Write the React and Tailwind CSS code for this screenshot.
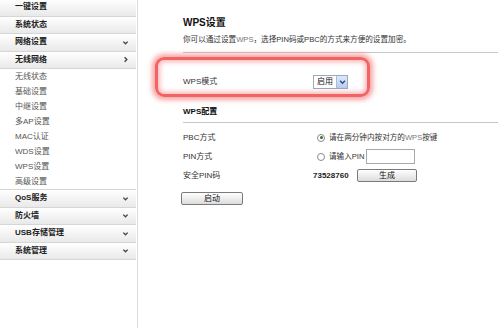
import React from 'react'

const font = { fontFamily: '"Liberation Sans", "Noto Sans CJK SC", sans-serif' }

const menuTop = [
  { label: '一键设置' },
  { label: '系统状态' },
  { label: '网络设置', icon: 'down' },
  { label: '无线网络', icon: 'right' },
]

const subMenu = ['无线状态', '基础设置', '中继设置', '多AP设置', 'MAC认证', 'WDS设置', 'WPS设置', '高级设置']

const menuBottom = ['QoS服务', '防火墙', 'USB存储管理', '系统管理']

const Chevron = ({ dir }) => (
  <svg width="7" height="7" viewBox="0 0 8 8" className="text-[#444]">
    {dir === 'right' ? (
      <path d="M3 1.5 L5.5 4 L3 6.5" fill="none" stroke="currentColor" strokeWidth="1.6" />
    ) : (
      <path d="M1.5 3 L4 5.5 L6.5 3" fill="none" stroke="currentColor" strokeWidth="1.6" />
    )}
  </svg>
)

const MenuRow = ({ label, icon }) => (
  <div className="h-[17.5px] flex items-center justify-between pl-[15px] pr-[7px] border-b border-[#d6d6d6] bg-gradient-to-b from-[#ffffff] to-[#e9e9e9] text-[8px] font-bold text-[#222]">
    <span>{label}</span>
    {icon && <Chevron dir={icon} />}
  </div>
)

const Radio = ({ checked }) => (
  <span className="w-[8px] h-[8px] rounded-full border border-[#8a8a8a] bg-white flex items-center justify-center mr-[4px]">
    {checked && <span className="w-[3px] h-[3px] rounded-full bg-[#3a6a3a]" />}
  </span>
)

const Button = ({ children, className }) => (
  <button className={`h-[13px] border border-[#7a7a7a] rounded-[2px] bg-gradient-to-b from-[#ffffff] to-[#dcdcdc] text-[8px] text-[#111] leading-none flex items-center justify-center ${className}`}>
    {children}
  </button>
)

export default function App() {
  return (
    <div className="w-[498px] h-[328px] bg-white flex overflow-hidden" style={font}>
      {/* Sidebar */}
      <aside className="w-[138px] h-full border-r border-[#dcdcdc] flex flex-col">
        <div className="-mt-[1px] w-[136px]">
          {menuTop.map((m) => (
            <MenuRow key={m.label} {...m} />
          ))}
          <div className="bg-white border-b border-[#d6d6d6]">
            {subMenu.map((s) => (
              <div key={s} className="h-[15px] flex items-center pl-[15px] text-[8px] text-[#555]">
                {s}
              </div>
            ))}
          </div>
          {menuBottom.map((m) => (
            <MenuRow key={m} label={m} icon="down" />
          ))}
        </div>
      </aside>

      {/* Main */}
      <main className="relative flex-1 pl-[45px] pt-[17px] text-[#333]">
        <div className="h-[12px] leading-[12px] text-[10px] font-bold text-[#111]">WPS设置</div>
        <div className="mt-[6px] h-[10px] leading-[10px] text-[7.6px]">
          你可以通过设置<span className="text-[#777]">WPS</span>，选择PIN码或PBC的方式来方便的设置加密。
        </div>
        <div className="mt-[7px] border-t border-[#c8c8c8]" />

        <div className="mt-[22px] h-[14px] flex items-center text-[8px]">
          <span className="w-[130px]">WPS模式</span>
          <div className="h-[14px] flex items-center border border-[#9aa9c0] bg-white">
            <span className="px-[3px] text-[8px] text-[#111]">启用</span>
            <span className="w-[11px] h-[12px] bg-gradient-to-b from-[#dce8fa] to-[#b7cdee] border-l border-[#a9bcdc] flex items-center justify-center">
              <svg width="7" height="6" viewBox="0 0 8 6">
                <path d="M1.2 1.5 L4 4.3 L6.8 1.5" fill="none" stroke="#2b4a88" strokeWidth="1.6" />
              </svg>
            </span>
          </div>
        </div>

        <div className="mt-[18px] h-[10px] leading-[10px] text-[8px] font-bold text-[#111]">WPS配置</div>
        <div className="mt-[5px] border-t border-[#c8c8c8]" />

        <div className="mt-[5px] text-[8px]">
          <div className="h-[19px] flex items-center">
            <span className="w-[134px]">PBC方式</span>
            <Radio checked />
            <span className="text-[7.6px]">请在两分钟内按对方的<span className="text-[#777]">WPS</span>按键</span>
          </div>
          <div className="h-[19px] flex items-center">
            <span className="w-[134px]">PIN方式</span>
            <Radio />
            <span className="text-[7.6px]">请输入PIN</span>
            <input className="ml-[2px] w-[49px] h-[15px] border border-[#a8a8a8] bg-white outline-none" />
          </div>
          <div className="h-[19px] flex items-center">
            <span className="w-[130px]">安全PIN码</span>
            <span className="font-semibold text-[#222] w-[44px]">73528760</span>
            <Button className="w-[60px]">生成</Button>
          </div>
        </div>

        <Button className="mt-[7px] -ml-[2px] w-[62px]">启动</Button>

        {/* red highlight annotation */}
        <div className="absolute left-[17px] top-[57px] w-[215px] h-[40px] rounded-[9px] border-[3px] border-[#f26464] shadow-[0_0_5px_3px_rgba(240,90,90,0.55),inset_0_0_5px_2px_rgba(240,90,90,0.45)] pointer-events-none" />
      </main>
    </div>
  )
}
